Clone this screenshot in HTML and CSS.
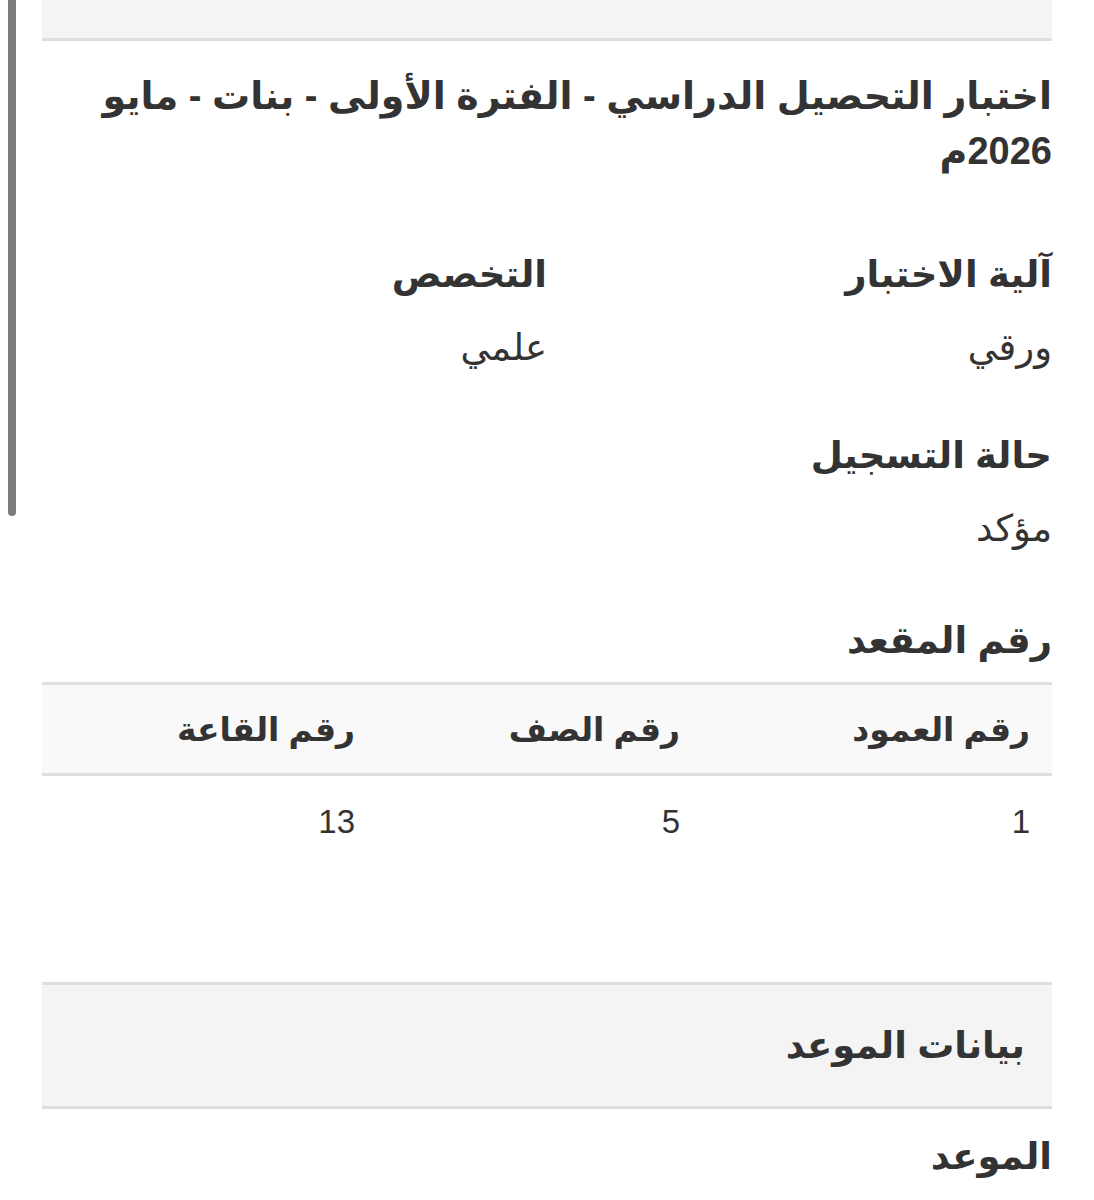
FILE: index.html
```html
<!DOCTYPE html>
<html lang="ar" dir="rtl">

<head>
  <meta charset="UTF-8">
  <meta name="viewport" content="width=device-width, initial-scale=1.0">
  <title>بيانات الاختبار</title>
  <link rel="stylesheet" href="styles.css">
</head>

<body>
  <div class="scrollbar"></div>
  <div class="page">
    <div class="panel top"></div>

    <h1 class="title">اختبار التحصيل الدراسي - الفترة الأولى - بنات - مايو 2026م</h1>

    <div class="fields">
      <div class="field">
        <div class="label">آلية الاختبار</div>
        <div class="value">ورقي</div>
      </div>
      <div class="field">
        <div class="label">التخصص</div>
        <div class="value">علمي</div>
      </div>
      <div class="field">
        <div class="label">حالة التسجيل</div>
        <div class="value">مؤكد</div>
      </div>
    </div>

    <div class="label seat">رقم المقعد</div>
    <table class="seats">
      <colgroup>
        <col class="c1">
        <col class="c2">
        <col class="c3">
      </colgroup>
      <thead>
        <tr>
          <th>رقم العمود</th>
          <th>رقم الصف</th>
          <th>رقم القاعة</th>
        </tr>
      </thead>
      <tbody>
        <tr>
          <td>1</td>
          <td>5</td>
          <td>13</td>
        </tr>
      </tbody>
    </table>

    <div class="panel section">
      <h2>بيانات الموعد</h2>
    </div>

    <div class="label last">الموعد</div>
  </div>
</body>

</html>
```

FILE: styles.css
```css
body {
  margin: 0;
  padding: 0;
  background: #fff;
  color: #333;
  font-family: "Liberation Sans", "DejaVu Sans", sans-serif;
}

.scrollbar {
  position: absolute;
  left: 8px;
  top: 0;
  width: 8px;
  height: 516px;
  background: #7b7b7b;
  border-radius: 0 0 4px 4px;
}

.page {
  margin: 0 42px;
  padding-bottom: 40px;
}

.panel {
  background: #f4f4f4;
  border-bottom: 3px solid #dedede;
}

.panel.top {
  height: 38px;
}

.title {
  margin: 28px 0 0;
  font-size: 38px;
  line-height: 55px;
  font-weight: bold;
}

.fields {
  display: grid;
  grid-template-columns: 1fr 1fr;
  row-gap: 62px;
  margin-top: 73px;
}

.label {
  font-size: 37px;
  font-weight: bold;
  line-height: 46px;
}

.value {
  font-size: 37px;
  line-height: 46px;
  margin-top: 27px;
}

.label.seat {
  margin-top: 66px;
}

.seats {
  width: 100%;
  margin-top: 18px;
  border-collapse: collapse;
  table-layout: fixed;
  font-size: 33px;
}

.seats .c1 {
  width: 350px;
}

.seats .c2 {
  width: 325px;
}

.seats th {
  background: #f9f9f9;
  border-top: 3px solid #dedede;
  border-bottom: 3px solid #dedede;
  height: 88px;
  padding: 0 22px;
  text-align: right;
  font-weight: bold;
}

.seats td {
  height: 92px;
  padding: 0 22px;
  vertical-align: middle;
}

.panel.section {
  margin-top: 114px;
  border-top: 3px solid #dedede;
  height: 121px;
  display: flex;
  align-items: center;
  padding: 0 27px;
}

.panel.section h2 {
  margin: 0;
  font-size: 37px;
  font-weight: bold;
}

.label.last {
  margin-top: 25px;
}
```
